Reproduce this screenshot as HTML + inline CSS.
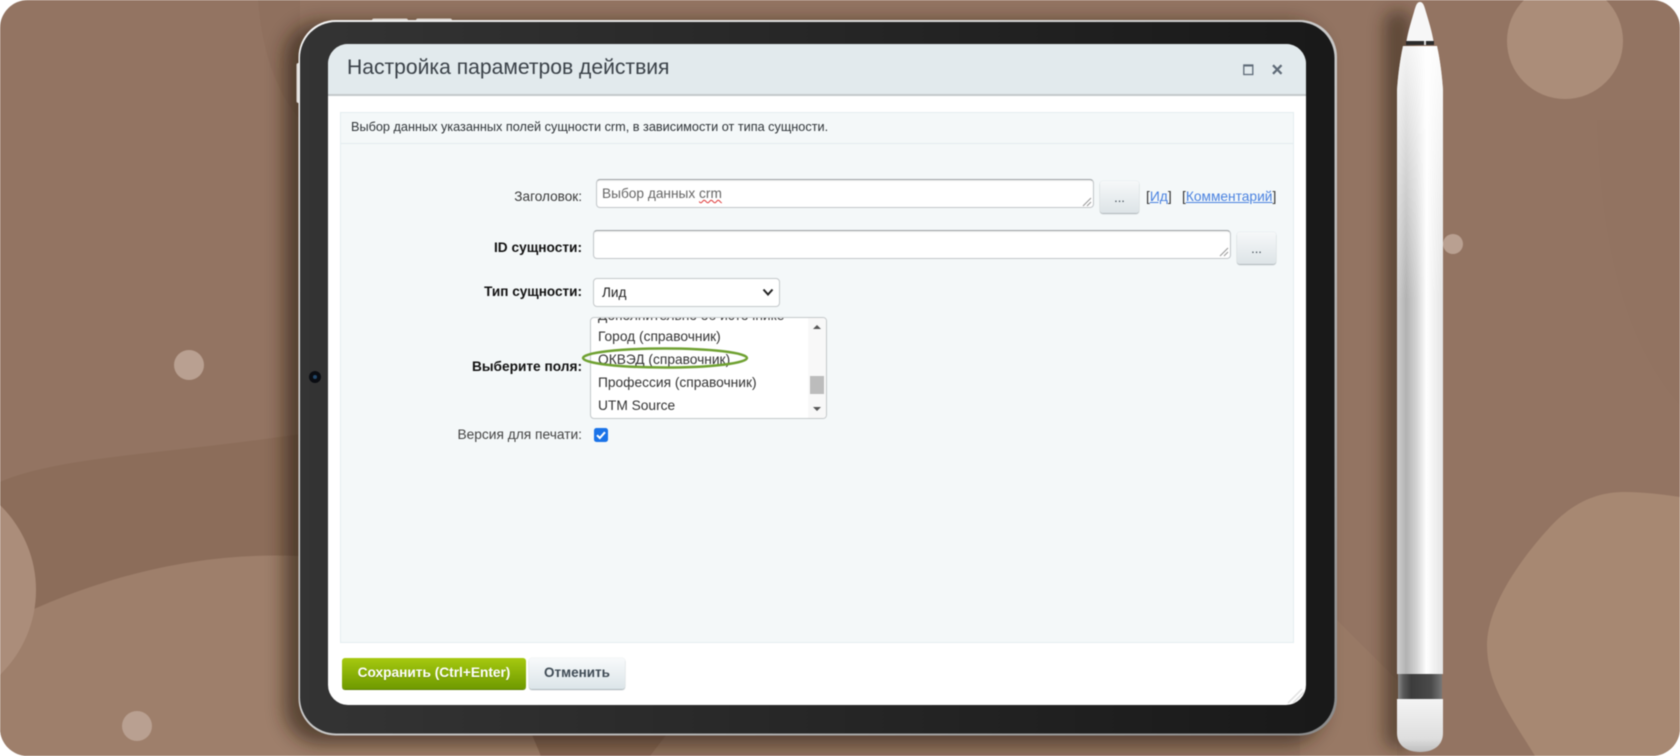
<!DOCTYPE html>
<html lang="ru"><head><meta charset="utf-8"><title>Настройка параметров действия</title>
<style>
html,body{margin:0;padding:0;background:#fff}
#p{position:relative;width:1680px;height:756px;overflow:hidden;background:#fff;font-family:"Liberation Sans",Arial,sans-serif;filter:blur(.45px)}
#p svg.full{position:absolute;left:0;top:0}
.a{position:absolute}
.t{position:absolute;white-space:nowrap;color:#333}
.r{text-align:right;left:380px;width:202px;font-size:13.7px;height:20px;line-height:20px}
.b{font-weight:bold;color:#111}
.inp{position:absolute;background:#fff;border:1px solid #c2c6c9;border-top-color:#9ca1a4;border-radius:4px;box-sizing:border-box;box-shadow:inset 0 1px 1px rgba(0,0,0,.08)}
.dots{position:absolute;box-sizing:border-box;border-radius:3px;background:linear-gradient(#f6f8f9,#dde4e7);box-shadow:0 1px 1px #aab2b6,0 0 1px #c5ccd0;text-align:center;color:#3f4b55;font-size:13px;line-height:34px}
.lnk{color:#4a82e0;text-decoration:underline}
.opt{position:absolute;left:7px;font-size:13.75px;height:20px;line-height:20px;color:#333;white-space:nowrap}
</style></head><body>
<div id="p">
<svg class="full" width="1680" height="756" viewBox="0 0 1680 756">
<defs>
<clipPath id="bg"><rect width="1680" height="756" rx="28"/></clipPath>
<linearGradient id="body" x1="0" x2="1" y1="0" y2="0">
<stop offset="0" stop-color="#d0d0d0"/><stop offset=".2" stop-color="#b2b2b2"/><stop offset=".43" stop-color="#d4d4d4"/><stop offset=".64" stop-color="#fff"/><stop offset=".8" stop-color="#f2f2f2"/><stop offset="1" stop-color="#e4e4e4"/></linearGradient>
<linearGradient id="top" x1="0" x2="0" y1="0" y2="1"><stop offset="0" stop-color="#fff" stop-opacity=".85"/><stop offset="1" stop-color="#fff" stop-opacity="0"/></linearGradient>
<linearGradient id="cap" x1="0" x2="0" y1="0" y2="1"><stop offset="0" stop-color="#f4f4f4"/><stop offset=".75" stop-color="#dedede"/><stop offset="1" stop-color="#bdbdbd"/></linearGradient>
<linearGradient id="band" x1="0" x2="1" y1="0" y2="0">
<stop offset="0" stop-color="#8a8a8a"/><stop offset=".12" stop-color="#5a5a5a"/><stop offset=".3" stop-color="#3c3c3c"/><stop offset=".75" stop-color="#4a4a4a"/><stop offset="1" stop-color="#777"/></linearGradient>
<linearGradient id="frame" x1="0" x2="1" y1="0" y2="0"><stop offset="0" stop-color="#343434"/><stop offset="1" stop-color="#191919"/></linearGradient>
<linearGradient id="edge" x1="0" x2="1" y1="0" y2="1"><stop offset="0" stop-color="#f4f4f4"/><stop offset=".6" stop-color="#c0c0c0"/><stop offset="1" stop-color="#8a8a8a"/></linearGradient>
<filter id="sh" x="-10%" y="-10%" width="120%" height="120%"><feGaussianBlur stdDeviation="9"/></filter>
<filter id="sp" x="-100%" y="-5%" width="300%" height="110%"><feGaussianBlur stdDeviation="8"/></filter>
</defs>
<g clip-path="url(#bg)">
<rect width="1680" height="756" fill="#937462"/>
<path d="M258 0C262 50 275 90 300 120L300 0Z" fill="#8f705e"/>
<path d="M1597 120C1602 280 1640 360 1680 405V120Z" fill="#927361"/>
<path d="M0 482C60 456 170 454 300 434V756H0Z" fill="#8c6d5a"/>
<path d="M0 625C110 570 210 552 300 556V756H0Z" fill="#9e7f6b"/>
<rect x="300" y="700" width="240" height="56" fill="#9e7f6b"/>
<rect x="640" y="700" width="670" height="56" fill="#917361"/>
<path d="M530 730L541 756H650L670 730Z" fill="#856654"/>
<path d="M1300 620H1337L1397 680V756H1300Z" fill="#987965"/>
<circle cx="-82" cy="590" r="118" fill="#ab8d7a"/>
<circle cx="189" cy="365" r="15" fill="#b9a091"/>
<circle cx="137" cy="726" r="15" fill="#b9a091"/>
<circle cx="1453" cy="244" r="10" fill="#b9a091"/>
<circle cx="1565" cy="41" r="58" fill="#ab8d79"/>
<path d="M1535 756C1510 715 1487 685 1487 645C1487 610 1515 565 1550 527C1575 500 1600 492 1625 492C1650 492 1680 497 1680 497V756Z" fill="#a78872"/>
</g>
<!-- shadows -->
<rect x="284" y="22" width="1040" height="722" rx="36" fill="#2a1a10" opacity=".6" filter="url(#sh)"/>
<rect x="1384" y="10" width="28" height="740" rx="14" fill="#2a1a10" opacity=".5" filter="url(#sp)"/>
<!-- side buttons -->
<rect x="372" y="18.5" width="36" height="5" rx="2" fill="#d9d2cc"/>
<rect x="416" y="18.5" width="36" height="5" rx="2" fill="#d9d2cc"/>
<rect x="296.5" y="63" width="6" height="40" rx="2" fill="#e0dcd8"/>
<!-- tablet -->
<rect x="298.5" y="20" width="1038.5" height="715.5" rx="37" fill="url(#edge)"/>
<rect x="300" y="22" width="1034.5" height="711.5" rx="36" fill="url(#frame)"/>
<circle cx="315" cy="377" r="6" fill="#0b0d12"/><circle cx="315" cy="377" r="2" fill="#23486b"/>
<!-- pen -->
<path d="M1397 699V733C1397 745 1406 752 1420 752C1434 752 1443 745 1443 733V699Z" fill="url(#cap)"/>
<rect x="1398" y="674" width="44" height="25" fill="url(#band)"/>
<path d="M1397 674V90C1398 75 1400 60 1403 46H1437C1440 60 1442 75 1443 90V674Z" fill="url(#body)"/>
<path d="M1397 300V90C1398 75 1400 60 1403 46H1437C1440 60 1442 75 1443 90V300Z" fill="url(#top)"/>
<path d="M1420 2C1423 2 1424 5 1426 12C1429 22 1432 32 1433.5 41H1406.500C1408 32 1411 22 1414 12C1416 5 1417 2 1420 2Z" fill="#f7f7f7"/>
<rect x="1406" y="41" width="28" height="4" fill="#2b2b2b"/><rect x="1424" y="41" width="2" height="4" fill="#ddd"/>
</svg>

<!-- screen -->
<div class="a" style="left:328px;top:44px;width:978px;height:661px;border-radius:20px;background:#fff;overflow:hidden">
  <div class="a" style="left:0;top:0;width:978px;height:50px;background:#e2eaed;border-bottom:2px solid #c4c9cb"></div>
  <svg class="a" style="left:948px;top:642px" width="30" height="19"><path d="M12 17L26 3M17 17L28 6" stroke="#e0e0e0" stroke-width="1.5"/></svg>
</div>
<div class="t" style="left:347px;top:52px;font-size:21.1px;line-height:32px;color:#3a4148">Настройка параметров действия</div>
<svg class="a" style="left:1242px;top:63px" width="42" height="13"><rect x="1.8" y="2" width="9" height="9.5" fill="none" stroke="#5f6b78" stroke-width="1.3"/><rect x="1.8" y="1.5" width="9" height="2" fill="#5f6b78"/><path d="M31 2.2L39.5 10.8M39.5 2.2L31 10.8" stroke="#5f6b78" stroke-width="2.2"/></svg>

<!-- panel -->
<div class="a" style="left:340px;top:112px;width:954px;height:531px;box-sizing:border-box;background:#f4f8f9;border:1px solid #e4edf0"></div>
<div class="a" style="left:341px;top:143px;width:952px;height:1px;background:#e3ebee"></div>
<div class="t" style="left:351px;top:117px;font-size:12.7px;line-height:20px;color:#2f3438">Выбор данных указанных полей сущности crm, в зависимости от типа сущности.</div>

<!-- Title row -->
<div class="t r" style="top:187px;color:#3a3a3a;font-size:13.6px">Заголовок:</div>
<div class="inp" style="left:595.500px;top:179px;width:498px;height:29px"></div>
<div class="t" style="left:602px;top:184px;font-size:13.7px;line-height:20px;color:#666">Выбор данных <span style="text-decoration:underline wavy #d33 1px">crm</span></div>
<svg class="a" style="left:1081px;top:196px" width="12" height="12"><path d="M2 10L10 2M6 10L10 6" stroke="#999" stroke-width="1"/></svg>
<div class="dots" style="left:1100px;top:181px;width:39px;height:32px">...</div>
<div class="t" style="left:1146px;top:187px;font-size:13.8px;line-height:20px;color:#333">[<span class="lnk">Ид</span>]</div>
<div class="t" style="left:1182px;top:187px;font-size:13.75px;line-height:20px;color:#333">[<span class="lnk">Комментарий</span>]</div>

<!-- ID row -->
<div class="t r b" style="top:238px;font-size:13.7px">ID сущности:</div>
<div class="inp" style="left:593px;top:230px;width:638px;height:29px"></div>
<svg class="a" style="left:1218px;top:246px" width="12" height="12"><path d="M2 10L10 2M6 10L10 6" stroke="#999" stroke-width="1"/></svg>
<div class="dots" style="left:1237px;top:232px;width:39px;height:32px">...</div>

<!-- Type row -->
<div class="t r b" style="top:282px;font-size:13.55px">Тип сущности:</div>
<div class="a" style="left:593px;top:278px;width:187px;height:29px;box-sizing:border-box;background:#fff;border:1px solid #c4c8ca;border-radius:4px"></div>
<div class="t" style="left:602px;top:283px;font-size:13.6px;line-height:20px;color:#222">Лид</div>
<svg class="a" style="left:762px;top:288px" width="12" height="9"><path d="M1.5 1.5L6 6.5L10.5 1.5" fill="none" stroke="#222" stroke-width="2"/></svg>

<!-- List row -->
<div class="t r b" style="top:357px;font-size:13.7px">Выберите поля:</div>
<div class="a" style="left:590px;top:317px;width:237px;height:101.5px;box-sizing:border-box;background:#fff;border:1px solid #c4c8ca;border-radius:4px;overflow:hidden">
  <div class="opt" style="top:-12px;color:#333">Дополнительно об источнике</div>
  <div class="opt" style="top:8.5px">Город (справочник)</div>
  <div class="opt" style="top:31.5px">ОКВЭД (справочник)</div>
  <div class="opt" style="top:54.5px">Профессия (справочник)</div>
  <div class="opt" style="top:77.5px">UTM Source</div>
  <div class="a" style="right:0;top:0;width:18px;height:100px;background:#f8f8f8"></div>
  <div class="a" style="right:2px;top:58px;width:14px;height:18px;background:#bcbcbc"></div>
  <svg class="a" style="right:0;top:0" width="18" height="100"><path d="M9 7L13 11H5Z" fill="#555"/><path d="M9 93L13 89H5Z" fill="#555"/></svg>
</div>
<svg class="a" style="left:580px;top:345px" width="170" height="26"><ellipse cx="85" cy="13" rx="82" ry="9.5" fill="none" stroke="#6fa131" stroke-width="2.5"/></svg>

<!-- Checkbox row -->
<div class="t r" style="top:425px;font-size:13.75px;color:#444">Версия для печати:</div>
<div class="a" style="left:594px;top:428px;width:14px;height:14px;background:#1a73e8;border-radius:2.5px"></div>
<svg class="a" style="left:594px;top:428px" width="14" height="14"><path d="M3 7.2L5.8 10L11 4.2" fill="none" stroke="#fff" stroke-width="2"/></svg>

<!-- Buttons -->
<div class="a" style="left:342px;top:658px;width:184px;height:31px;border-radius:3px;background:linear-gradient(#a6c90f,#6f9a00);box-shadow:0 1px 0 #5d8000;color:#fff;font-weight:bold;font-size:13.7px;line-height:30px;text-align:center;text-shadow:0 1px 0 rgba(0,0,0,.15)">Сохранить (Ctrl+Enter)</div>
<div class="a" style="left:529px;top:658px;width:96px;height:31px;border-radius:3px;background:linear-gradient(#f8fafb,#dce5e9);box-shadow:0 1px 1px #a5afb4,0 0 1px #c5cdd1;color:#3f4b55;font-weight:bold;font-size:13.5px;line-height:30px;text-align:center">Отменить</div>
</div>
</body></html>
